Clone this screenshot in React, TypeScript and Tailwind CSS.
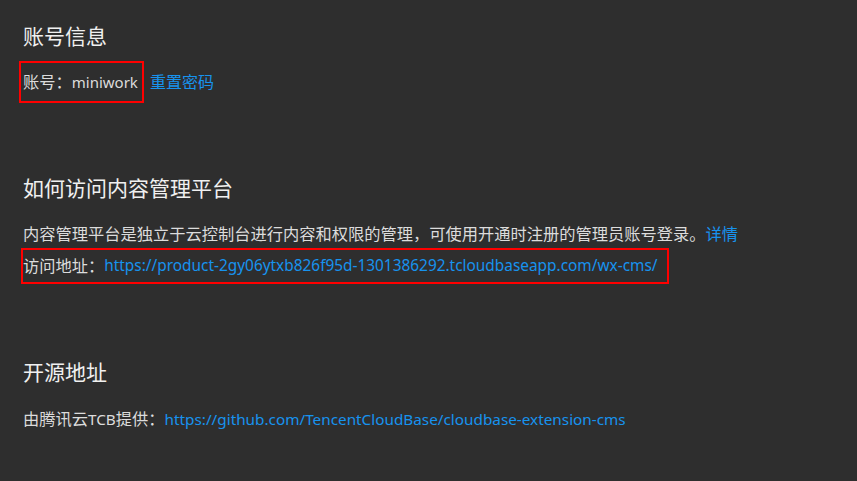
import React from "react";

const font = {
  fontFamily: '"Noto Sans", "Noto Sans CJK SC", sans-serif',
};

export default function App() {
  return (
    <div
      className="min-h-[481px] w-full bg-[#2e2e2e] pt-[22px] pl-[23px] text-[#dcdcdc]"
      style={font}
    >
      <h2 className="text-[21px] leading-[28px] font-normal text-[#f0f0f0]">账号信息</h2>
      <div className="mt-[11px] flex items-center">
        <div className="-ml-[4px] flex h-[42px] w-[125px] items-center border-2 border-[#ff0000] pl-[2px] text-[16.25px] leading-[22px]">
          账号：<span className="text-[15px]">miniwork</span>
        </div>
        <a className="ml-[6px] text-[16px] leading-[22px] text-[#1793ee]">重置密码</a>
      </div>

      <h2 className="mt-[71px] text-[21px] leading-[28px] font-normal text-[#f0f0f0]">如何访问内容管理平台</h2>
      <p className="mt-[21px] text-[16.25px] leading-[22px]">
        内容管理平台是独立于云控制台进行内容和权限的管理，可使用开通时注册的管理员账号登录。
        <a className="text-[#1793ee]">详情</a>
      </p>
      <div className="-ml-[2px] mt-[3px] flex h-[36px] w-[648px] items-center border-2 border-[#ff0000] text-[16.25px] leading-[22px]">
        访问地址：
        <a className="text-[15.4px] text-[#1793ee]">https://product-2gy06ytxb826f95d-1301386292.tcloudbaseapp.com/wx-cms/</a>
      </div>

      <h2 className="mt-[74px] text-[21px] leading-[28px] font-normal text-[#f0f0f0]">开源地址</h2>
      <p className="mt-[22px] text-[16.25px] leading-[22px]">
        由腾讯云<span className="text-[15.3px]">TCB</span>提供：
        <a className="text-[15.3px] text-[#1793ee]">https://github.com/TencentCloudBase/cloudbase-extension-cms</a>
      </p>
    </div>
  );
}
